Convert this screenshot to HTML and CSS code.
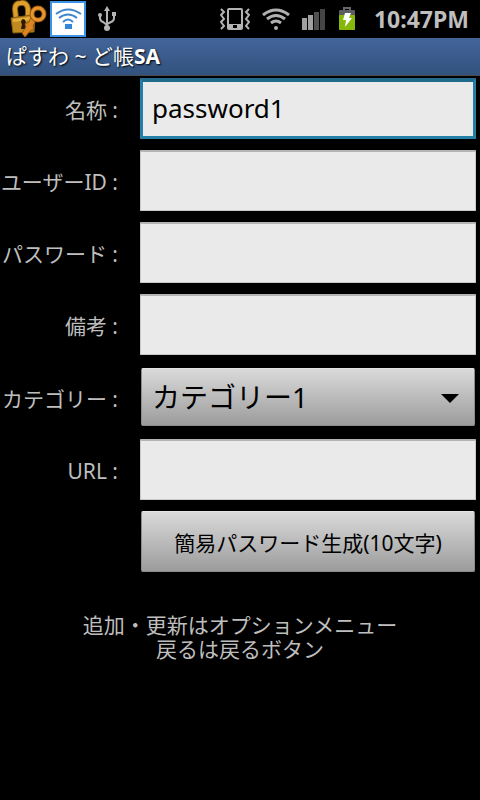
FILE: index.html
```html
<!DOCTYPE html>
<html lang="ja">
<head>
    <meta charset="UTF-8">
    <meta name="viewport" content="width=device-width, initial-scale=1.0">
    <title>ぱすわ～ど帳SA</title>
    <link rel="stylesheet" href="styles.css">
</head>
<body>

<!-- ステータスバー -->
<div class="status-bar">
    <div class="status-left">
        <svg class="icon-lock" width="38" height="38" viewBox="0 0 38 38">
            <path d="M7 18L6 9q0-6 6-6 6-1 7 6v8" fill="none" stroke="#8a5a10" stroke-width="6"/>
            <path d="M7 18L6 9q0-6 6-6 6-1 7 6v8" fill="none" stroke="#dda02c" stroke-width="4"/>
            <path d="M2 18l20-3 4 3-1 14-21 1z" fill="#c08a1e" stroke="#8a5c12"/>
            <path d="M4 19l18-2v3L4 22z" fill="#e3b03c"/>
            <path d="M14 19a3 3 0 0 1 2 5l1 5h-5l1-5a3 3 0 0 1 1-5z" fill="#2a1a06"/>
            <path d="M22 17l4 5-2 4 1 3-4 2-5 6-3-4 4-6-1-3 4-2z" fill="#d98522" stroke="#9a5510"/>
            <circle cx="29" cy="14" r="6" fill="none" stroke="#9a5510" stroke-width="5"/>
            <circle cx="29" cy="14" r="6" fill="none" stroke="#e8962e" stroke-width="3"/>
        </svg>
        <svg width="36" height="36" viewBox="0 0 36 36">
            <rect x="1" y="1" width="34" height="34" fill="#fff" stroke="#3b93e6" stroke-width="2"/>
            <path d="M6 13Q18 4 31 13M9 17Q18 10 27 17M13 21Q18 16 23 21" fill="none" stroke="#3f86cc" stroke-width="2"/>
            <rect x="15" y="23" width="7" height="5" fill="#3285d8"/>
        </svg>
        <svg width="18" height="26" viewBox="0 0 18 26" fill="none" stroke="#b4b4b4" stroke-width="2">
            <path d="M9 3v19M2 10v2q0 3 3 4l4 3M16 9v3q0 3-3 4l-4 2"/>
            <path d="M9 0l3 5H6z" fill="#b4b4b4" stroke="none"/>
            <circle cx="2" cy="9" r="2" fill="#b4b4b4" stroke="none"/>
            <rect x="14" y="6" width="4" height="4" fill="#b4b4b4" stroke="none"/>
            <circle cx="9" cy="22" r="3" fill="#b4b4b4" stroke="none"/>
        </svg>
    </div>
    <div class="status-right">
        <svg width="30" height="24" viewBox="0 0 30 24" fill="none" stroke="#b4b4b4" stroke-width="2">
            <path fill="#b4b4b4" fill-rule="evenodd" stroke="none" d="M9 1h12q2 0 2 2v18q0 2-2 2H9q-2 0-2-2V3q0-2 2-2zM9 3v14h12V3zM13 18v3h4v-3z"/>
            <path d="M1 2l3 3-3 3 3 4-3 3 3 4-3 3M29 2l-3 3 3 3-3 4 3 3-3 4 3 3"/>
        </svg>
        <svg width="28" height="22" viewBox="0 0 28 22" fill="none" stroke="#b0b0b0" stroke-width="3">
            <path d="M1 7Q14-3 27 7M5 11Q14 4 23 11M9 15Q14 11 19 15"/>
            <circle cx="14" cy="20" r="2" fill="#b0b0b0" stroke="none"/>
        </svg>
        <svg width="24" height="22" viewBox="0 0 24 22">
            <rect x="0" y="10" width="5" height="12" fill="#a0a0a0"/>
            <rect x="6" y="7" width="5" height="15" fill="#a0a0a0"/>
            <rect x="12" y="4" width="5" height="18" fill="#505050"/>
            <rect x="18" y="1" width="5" height="21" fill="#454545"/>
        </svg>
        <svg width="18" height="24" viewBox="0 0 18 24">
            <path d="M6 3V1h6v2" fill="none" stroke="#66666e" stroke-width="2"/>
            <rect x="1" y="3" width="16" height="20" rx="1" fill="#5b5d60"/>
            <rect x="1" y="8" width="16" height="15" rx="1" fill="#86b80c"/>
            <path d="M7 6h6l-2 5h3l-7 9 1-7H5z" fill="#fff"/>
        </svg>
        <span class="clock">10:47PM</span>
    </div>
</div>

<h1 class="title-bar">ぱすわ ~ ど帳<b>SA</b></h1>

<!-- 入力フォーム -->
<form class="entry-form" onsubmit="return false">
    <label for="name">名称 :</label>
    <input type="text" id="name" class="focused" value="password1">

    <label for="user-id">ユーザーID :</label>
    <input type="text" id="user-id">

    <label for="password">パスワード :</label>
    <input type="text" id="password">

    <label for="note">備考 :</label>
    <input type="text" id="note">

    <label for="category">カテゴリー :</label>
    <div class="select-box">
        <select id="category">
            <option>カテゴリー1</option>
        </select>
    </div>

    <label for="url">URL :</label>
    <input type="text" id="url">

    <button type="button" class="generate-button">簡易パスワード生成(10文字)</button>
</form>

<p class="guide">追加・更新はオプションメニュー<br>戻るは戻るボタン</p>

</body>
</html>
```
FILE: styles.css
```css
* {
    box-sizing: border-box;
}

body {
    font-family: "Noto Sans", "Noto Sans CJK JP", sans-serif;
    font-size: 21px;
    line-height: 24px;
    background-color: #000;
    color: #bebebe;
    margin: 0;
}

.status-bar {
    display: flex;
    justify-content: space-between;
    align-items: center;
    height: 38px;
    padding: 0 11px 0 9px;
}

.status-left,
.status-right {
    display: flex;
    align-items: center;
    gap: 12px;
}

.icon-lock {
    margin-right: -9px;
}

.clock {
    font-size: 23px;
    font-weight: bold;
    margin-left: 6px;
}

.title-bar {
    height: 38px;
    margin: 0;
    padding: 0 6px;
    font-size: 21px;
    font-weight: 400;
    line-height: 36px;
    color: #fff;
    text-shadow: 1px 1px 2px #000;
    background: linear-gradient(#44659a, #31527d);
    border-bottom: 1px solid #4a4a52;
}

.entry-form {
    display: grid;
    grid-template-columns: 118px 1fr;
    column-gap: 22px;
    row-gap: 11px;
    align-items: center;
    padding: 2px 4px 0 0;
}

.entry-form label {
    padding-top: 3px;
    text-align: right;
    white-space: pre;
}

.entry-form input {
    width: 100%;
    height: 61px;
    padding: 0 12px 4px;
    font-family: inherit;
    font-size: 26px;
    color: #000;
    background-color: #eaeaea;
    border: 1px solid #c8c8c8;
    border-top: 2px solid #b4b4b4;
    border-radius: 1px;
    outline: none;
}

.entry-form input.focused {
    padding: 0 9px 2px;
    border: 3px solid #2580a8;
    border-top: 4px solid #206a8c;
}

.select-box {
    position: relative;
    padding: 2px 1px;
}

.select-box::after {
    content: "";
    position: absolute;
    top: 28px;
    right: 17px;
    border: 9px solid transparent;
    border-top-color: #000;
    border-bottom: none;
    pointer-events: none;
}

.select-box select {
    display: block;
    appearance: none;
    width: 100%;
    height: 58px;
    padding: 0 10px;
    font-family: inherit;
    font-size: 28px;
}

.select-box select,
.generate-button {
    color: #000;
    background: linear-gradient(#dadada, #9c9c9c);
    border: 1px solid #8c8c8c;
    border-top-color: #e4e4e4;
    border-radius: 2px;
}

.generate-button {
    grid-column: 2;
    height: 61px;
    margin: 0 1px;
    padding: 0;
    font-family: inherit;
    font-size: 21px;
}

.guide {
    margin: 41px 0 0;
    text-align: center;
}
```
